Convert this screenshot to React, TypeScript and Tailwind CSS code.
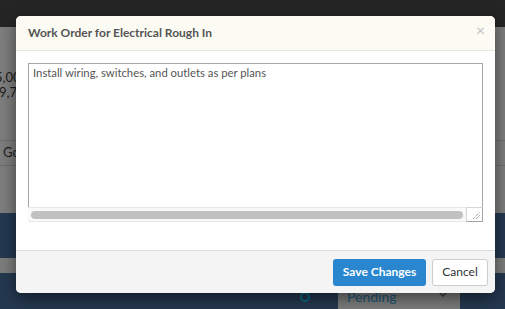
import React from "react";

export default function App() {
  const font = { fontFamily: "Lato, 'Open Sans', Arial, sans-serif" };
  return (
    <div className="relative w-[505px] h-[309px] overflow-hidden bg-[#24384f]" style={font}>
      {/* background page */}
      <div className="flex flex-col">
        <div className="h-[27px] bg-[#252525]" />
        <div className="h-[186px] bg-[#7d7d7d] flex flex-col">
          <div className="pt-[43px] text-[13px] leading-[15px] text-[#1c1c1c] whitespace-nowrap">
            <div className="-ml-[5px]">5,000</div>
            <div className="-ml-[1px]">9,700</div>
          </div>
          <div className="mt-[40px] h-[26px] border-t border-b border-[#6c6c6c] flex items-center">
            <span className="pl-[3px] text-[13px] text-[#1c1c1c]">Go</span>
          </div>
        </div>
        <div className="h-[45px] bg-[#24384f]" />
        <div className="h-[15px] bg-[#7c7c7c]" />
        <div className="h-[36px] bg-[#24384f] flex items-start">
          <div className="ml-[300px] mt-[19px] w-[10px] h-[10px] rounded-full border-2 border-[#0d6a80]" />
          <div className="ml-[28px] mt-[9px] w-[122px] h-[30px] rounded-[4px] bg-[#7b7b7b] flex items-start justify-between px-[9px] pt-[7px]">
            <span className="text-[14px] leading-[16px] text-[#1a5478]">Pending</span>
            <svg width="10" height="8" viewBox="0 0 10 8" className="mt-[2px] mr-[3px]">
              <path d="M1 1 L5 5 L9 1" stroke="#3a3a3a" strokeWidth="1.5" fill="none" />
            </svg>
          </div>
        </div>
      </div>

      {/* modal */}
      <div className="absolute left-[16px] top-[16px] w-[479px] h-[277px] rounded-[5px] bg-white shadow-[0_5px_15px_rgba(0,0,0,0.5)] flex flex-col overflow-hidden">
        <div className="h-[35px] shrink-0 bg-[#fbfbf3] border-b border-[#e8e8e0] flex items-center justify-between pl-[12px] pr-[10px]">
          <span className="text-[12px] font-bold text-[#555555]">Work Order for Electrical Rough In</span>
          <span className="text-[16px] leading-none text-[#c4c4c4] -mt-[6px]">×</span>
        </div>
        <div className="flex-1 px-[12px] pt-[12px]">
          <div className="h-[159px] flex flex-col">
            <div className="flex-1 border-t border-l border-r border-[#a6a6a6] px-[4px] pt-[1px] text-[11.3px] leading-[15px] text-[#555555]">
              Install wiring, switches, and outlets as per plans
            </div>
            <div className="h-[15px] flex">
              <div className="flex-1 bg-[#f9f9f9] border-t border-b border-[#e8e8e8] flex items-center pl-[3px] pr-[3px]">
                <div className="h-[8px] w-full rounded-full bg-[#c1c1c1]" />
              </div>
              <div className="w-[17px] border-t border-l border-[#d6d6d6] border-r border-b border-r-[#a6a6a6] border-b-[#a6a6a6] bg-white flex items-end justify-end">
                <svg width="10" height="10" viewBox="0 0 10 10" className="mb-[1px] mr-[1px]">
                  <path d="M2 9 L9 2 M5 9 L9 5" stroke="#555" strokeWidth="0.8" strokeDasharray="1 1" />
                </svg>
              </div>
            </div>
          </div>
        </div>
        <div className="h-[43px] shrink-0 bg-[#f4f4f4] border-t border-[#dddddd] flex items-center justify-end gap-[6px] pr-[7px]">
          <button className="w-[93px] h-[27px] rounded-[3px] bg-[#2a86cf] text-white text-[12px] font-bold">
            Save Changes
          </button>
          <button className="w-[56px] h-[27px] rounded-[3px] bg-white border border-[#cccccc] text-[#333333] text-[12px]">
            Cancel
          </button>
        </div>
      </div>
    </div>
  );
}
